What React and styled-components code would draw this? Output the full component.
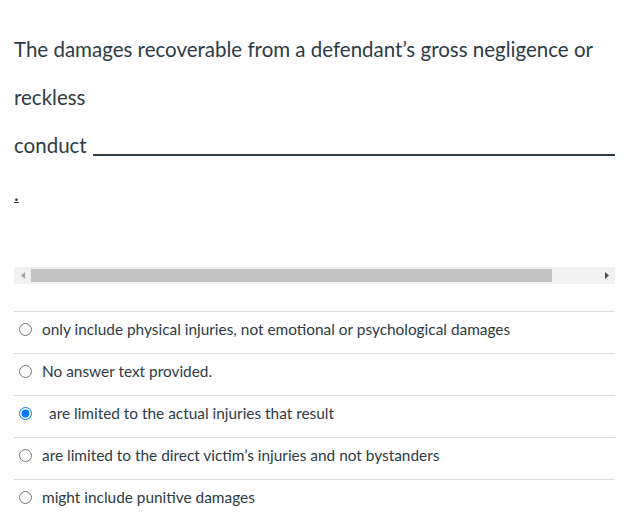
import React from "react";
import styled, { createGlobalStyle } from "styled-components";

const Global = createGlobalStyle`
  html, body { margin: 0; padding: 0; background: #ffffff; }
  body { font-family: Lato, "Open Sans", "Liberation Sans", sans-serif; color: #2d3b45; }
`;

const Page = styled.div`
  width: 601px;
  padding: 25px 21px 0 14px;
`;

const Question = styled.div`
  font-size: 20.5px;
`;

const Line = styled.p`
  margin: 0;
  height: 48px;
  line-height: 48px;
  display: flex;
  align-items: baseline;
`;

const Blank = styled.span`
  flex: 1;
  margin-left: 6px;
  height: 2px;
  background: #2d3b45;
  align-self: flex-end;
  margin-bottom: 13px;
`;

const Underlined = styled.u`
  text-decoration-thickness: 1px;
`;

const Scrollbar = styled.div`
  margin-top: 50px;
  height: 17px;
  background: #f1f1f1;
  display: flex;
  align-items: center;
`;

const ScrollButton = styled.div`
  width: 17px;
  height: 17px;
  display: flex;
  align-items: center;
  justify-content: center;
  flex: none;
`;

const Thumb = styled.div`
  height: 13px;
  width: 521px;
  background: #c1c1c1;
  flex: none;
`;

const Spacer = styled.div`
  flex: 1;
`;

const Answers = styled.div`
  margin-top: 27px;
`;

const Row = styled.label`
  display: flex;
  align-items: flex-start;
  height: 41px;
  border-top: 1px solid #dcdcdc;
  font-size: 15.4px;
`;

const RowInner = styled.div`
  display: flex;
  align-items: center;
  height: 33px;
`;

const Radio = styled.input`
  width: 13px;
  height: 13px;
  margin: 2px 0 0 5px;
  flex: none;
`;

const AnswerText = styled.span`
  margin-left: ${(p) => (p.$selected ? 17 : 10)}px;
  line-height: 18px;
`;

const answers = [
  { text: "only include physical injuries, not emotional or psychological damages" },
  { text: "No answer text provided." },
  { text: "are limited to the actual injuries that result", selected: true },
  { text: "are limited to the direct victim’s injuries and not bystanders" },
  { text: "might include punitive damages" },
];

const Arrow = ({ dir, color }) => (
  <svg width="4" height="7" viewBox="0 0 4 7">
    {dir === "left" ? (
      <polygon points="4,0 4,7 0,3.5" fill={color} />
    ) : (
      <polygon points="0,0 0,7 4,3.5" fill={color} />
    )}
  </svg>
);

export default function App() {
  return (
    <Page>
      <Global />
      <Question>
        <Line>The damages recoverable from a defendant’s gross negligence or</Line>
        <Line>reckless</Line>
        <Line>
          conduct<Blank />
        </Line>
        <Line>
          <Underlined>.</Underlined>
        </Line>
      </Question>
      <Scrollbar>
        <ScrollButton>
          <Arrow dir="left" color="#a3a3a3" />
        </ScrollButton>
        <Thumb />
        <Spacer />
        <ScrollButton>
          <Arrow dir="right" color="#505050" />
        </ScrollButton>
      </Scrollbar>
      <Answers>
        {answers.map((a, i) => (
          <Row key={i}>
            <RowInner>
              <Radio type="radio" name="answer" defaultChecked={!!a.selected} />
              <AnswerText $selected={a.selected}>{a.text}</AnswerText>
            </RowInner>
          </Row>
        ))}
      </Answers>
    </Page>
  );
}
